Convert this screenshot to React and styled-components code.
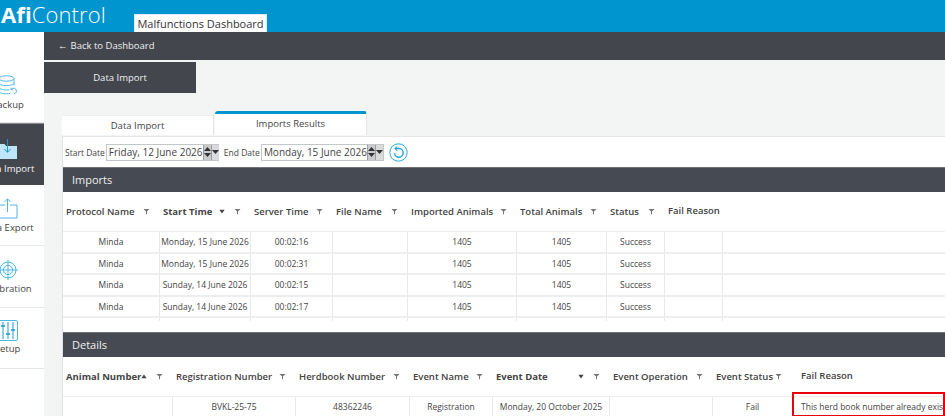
import React from 'react';
import styled, { createGlobalStyle } from 'styled-components';

const Global = createGlobalStyle`
  html, body {
    margin: 0;
    height: 416px;
    overflow: hidden;
    background: #f3f5f5;
    font-family: "Open Sans", "Noto Sans", sans-serif;
    color: #444;
  }
  * { box-sizing: border-box; }
`;

const Page = styled.div`
  width: 945px;
  height: 416px;
  overflow: hidden;
  display: flex;
  flex-direction: column;
`;

const Header = styled.header`
  height: 32px;
  flex: none;
  background: #0095cf;
  display: flex;
  align-items: flex-end;
`;

const Logo = styled.div`
  width: 134px;
  align-self: flex-start;
  padding: 0 0 0 1px;
  font-size: 22px;
  line-height: 29px;
  font-weight: 300;
  color: #fff;
  letter-spacing: 0.1px;
  b { font-weight: 700; }
`;

const HeaderTab = styled.div`
  width: 133px;
  height: 18px;
  background: #fff;
  border: 1px solid #d6ecf6;
  border-bottom: 0;
  color: #333;
  font-size: 11px;
  line-height: 17px;
  text-align: center;
`;

const Body = styled.div`
  flex: 1;
  display: flex;
  min-height: 0;
`;

const Sidebar = styled.nav`
  width: 73px;
  margin-left: -29px;
  flex: none;
  background: #fff;
  padding-top: 28px;
`;

const NavItem = styled.div`
  height: ${p => p.$h}px;
  display: flex;
  flex-direction: column;
  align-items: center;
  padding-top: ${p => p.$top}px;
  gap: 1px;
  font-size: 9.5px;
  line-height: 13px;
  white-space: nowrap;
  color: ${p => (p.$active ? '#f2f3f4' : '#444')};
  background: ${p => (p.$active ? '#44464d' : '#fff')};
  border-bottom: 1px solid ${p => (p.$active ? '#44464d' : '#e4e6e8')};
  border-top: ${p => (p.$active ? '1px solid #8a8c90' : '0')};
  svg { display: block; flex: none; }
`;

const Main = styled.main`
  flex: 1;
  min-width: 0;
  display: flex;
  flex-direction: column;
`;

const BackBar = styled.div`
  height: 28px;
  flex: none;
  background: #44464d;
  color: #eef0f1;
  font-size: 9.5px;
  line-height: 28px;
  padding-left: 14px;
  display: flex;
  align-items: center;
  gap: 3px;
`;

const PageTitle = styled.div`
  width: 152px;
  height: 31px;
  flex: none;
  margin-top: 2px;
  background: #44464d;
  color: #eef0f1;
  font-size: 9.5px;
  line-height: 31px;
  text-align: center;
`;

const Content = styled.div`
  flex: 1;
  min-height: 0;
  padding: 17px 0 0 18px;
  display: flex;
  flex-direction: column;
`;

const Tabs = styled.div`
  height: 25px;
  flex: none;
  display: flex;
  align-items: flex-end;
  gap: 1px;
`;

const Tab = styled.div`
  width: ${p => p.$w}px;
  height: ${p => (p.$active ? 24 : 20)}px;
  background: #fff;
  border-top: ${p => (p.$active ? '3px solid #0095cf' : '1px solid #eceef0')};
  border-radius: ${p => (p.$active ? '3px 3px 0 0' : '0')};
  border-right: 1px solid #e4e6e8;
  font-size: 9.5px;
  line-height: 19px;
  text-align: center;
  color: #444;
`;

const Panel = styled.section`
  flex: 1;
  min-height: 0;
  margin-top: 1px;
  background: #fff;
  border-left: 1px solid #dfe2e4;
  border-top: 1px solid #e4e6e8;
`;

const DateRow = styled.div`
  height: 30px;
  display: flex;
  align-items: center;
  padding: 0 0 0 2px;
  font-size: 8.5px;
  color: #444;
`;

const DateLabel = styled.span`
  margin-right: ${p => p.$gap}px;
  margin-left: ${p => p.$left}px;
  white-space: nowrap;
`;

const DatePicker = styled.div`
  width: ${p => p.$w}px;
  height: 17px;
  display: flex;
  align-items: stretch;
  border: 1px solid #c4c7ca;
  font-size: 10px;
  line-height: 15px;
  padding-left: 2px;
  color: #444;
`;

const DateText = styled.span`
  flex: 1;
  white-space: nowrap;
`;

const Spin = styled.div`
  width: 11px;
  background: #c9cbce;
  border-left: 1px solid #9a9ca0;
  display: flex;
  flex-direction: column;
  align-items: center;
  justify-content: center;
  gap: 2px;
`;

const Drop = styled.div`
  width: 11px;
  background: #d8dadc;
  border-left: 1px solid #9a9ca0;
  display: flex;
  align-items: center;
  justify-content: center;
`;

const RefreshWrap = styled.div`
  margin-left: 5px;
  display: flex;
`;

const SectionBar = styled.div`
  height: 25px;
  background: #464a52;
  border-top: 1px solid #6f7278;
  color: #eef0f1;
  font-size: 11px;
  line-height: 24px;
  padding-left: 9px;
`;

const Grid = styled.div`
  display: grid;
  grid-template-columns: ${p => p.$cols};
`;

const HeadRow = styled(Grid)`
  height: 40px;
  border-bottom: 1px solid #eceef0;
`;

const HeadCell = styled.div`
  display: flex;
  align-items: center;
  justify-content: space-between;
  padding: 0 10px 0 3px;
  font-size: 9.5px;
  font-weight: ${p => (p.$strong ? 700 : 600)};
  color: #444;
  white-space: nowrap;
`;

const HeadIcons = styled.span`
  display: flex;
  align-items: center;
  gap: 9px;
`;

const PlainHead = styled.div`
  padding: 12px 0 0 3px;
  font-size: 9.5px;
  font-weight: 600;
  color: #444;
  white-space: nowrap;
`;

const Row = styled(Grid)`
  height: 21.5px;
  border-bottom: 2px solid #eceef0;
`;

const Cell = styled.div`
  border-right: ${p => (p.$bare ? '0' : '1px solid #e6e8ea')};
  font-size: 8.5px;
  line-height: 20px;
  text-align: center;
  color: #444;
  white-space: nowrap;
  overflow: hidden;
`;

const Stubs = styled(Grid)`
  height: 3px;
  margin-bottom: 11px;
`;

const DetailRow = styled(Grid)`
  height: 21px;
  background: linear-gradient(#333, #333) left bottom / 675px 1px no-repeat;
`;

const ReasonCell = styled.div`
  position: relative;
  padding-left: 9px;
  font-size: 8.5px;
  line-height: 20px;
  white-space: nowrap;
  color: #444;
`;

const Highlight = styled.div`
  position: absolute;
  left: 0;
  top: -5px;
  width: 153px;
  height: 25px;
  border: 2.5px solid #e8000d;
`;

const Funnel = () => (
  <svg width="7" height="7" viewBox="0 0 7 7"><path d="M0.5 1h6L4 3.6V6.2H3V3.6z" fill="#777" /></svg>
);

const Sort = ({ up }) => (
  <svg width="6" height="5" viewBox="0 0 6 5"><path d={up ? 'M3 .5L5.6 4.2H.4z' : 'M.4 .8h5.2L3 4.5z'} fill="#444" /></svg>
);

const Spinner = ({ up }) => (
  <svg width="7" height="4" viewBox="0 0 7 4"><path d={up ? 'M3.5 0L7 4H0z' : 'M0 0h7L3.5 4z'} fill="#333" /></svg>
);

const Refresh = () => (
  <svg width="19" height="19" viewBox="0 0 19 19" fill="none" stroke="#2aa5dc">
    <circle cx="9.5" cy="9.5" r="8.7" strokeWidth="1" />
    <path d="M6.6 5.6h3.6a4.3 4.3 0 1 1-4.6 4.6" strokeWidth="1.5" />
    <path d="M8.3 3.6L6.1 5.6l2.2 2" strokeWidth="1.2" />
  </svg>
);

const BackupIcon = () => (
  <svg width="22" height="22" viewBox="0 0 22 22" fill="none" stroke="#4db8e8" strokeWidth="1">
    <ellipse cx="9.5" cy="3.5" rx="7.5" ry="2.7" />
    <path d="M2 3.5v12.5c0 1.6 3.4 2.8 7.5 2.8 1.4 0 2.6-.1 3.7-.4M17 3.5v7" />
    <path d="M2 7.8c0 1.6 3.4 2.8 7.5 2.8S17 9.4 17 7.8M2 12.2c0 1.6 3.4 2.8 7.5 2.8 1 0 2-.1 2.8-.2" />
    <path d="M14 14.6a3 3 0 0 1 5.5 1.4c0 1.5-1.2 2.6-2.6 2.6M14 12.6v2.2h2.2" />
  </svg>
);

const ImportIcon = () => (
  <svg width="21" height="22" viewBox="0 0 21 22">
    <path d="M1 5h6.5l1.5 2h11v13H1z" fill="#bfe6f8" />
    <path d="M10.5 0v13M7.5 10l3 3.4 3-3.4" fill="none" stroke="#1b9bd6" strokeWidth="1" />
  </svg>
);

const ExportIcon = () => (
  <svg width="21" height="22" viewBox="0 0 21 22" fill="none" stroke="#4db8e8" strokeWidth="1">
    <path d="M8 7H1v13h19V7h-7" />
    <path d="M10.5 14V1M7.5 4l3-3.2 3 3.2" />
  </svg>
);

const CalibrationIcon = () => (
  <svg width="20" height="22" viewBox="0 0 20 22" fill="none" stroke="#4db8e8" strokeWidth="1">
    <circle cx="10" cy="11" r="8" />
    <circle cx="10" cy="11" r="4.6" />
    <path d="M10 1v20M0 11h20" />
  </svg>
);

const SetupIcon = () => (
  <svg width="20" height="21" viewBox="0 0 20 21" fill="none" stroke="#4db8e8" strokeWidth="1">
    <rect x=".5" y=".5" width="19" height="20" rx="1.5" />
    <path d="M5 2v17M10 2v17M15 2v17" stroke="#1b9bd6" />
    <path d="M3 6h4M8 14h4M13 10h4" stroke="#1b9bd6" strokeWidth="1.6" />
  </svg>
);

const importCols = '97px 91px 82px 75px 109px 90px 58px 58px 1fr';
const detailCols = '110px 123px 114px 83px 117px 103px 79px 1fr';

const importHeads = [
  { label: 'Protocol Name' },
  { label: 'Start Time', strong: true, sort: 'down' },
  { label: 'Server Time' },
  { label: 'File Name' },
  { label: 'Imported Animals' },
  { label: 'Total Animals' },
  { label: 'Status' },
];

const importRows = [
  ['Minda', 'Monday, 15 June 2026', '00:02:16'],
  ['Minda', 'Monday, 15 June 2026', '00:02:31'],
  ['Minda', 'Sunday, 14 June 2026', '00:02:15'],
  ['Minda', 'Sunday, 14 June 2026', '00:02:17'],
];

const detailHeads = [
  { label: 'Animal Number', strong: true, sort: 'up' },
  { label: 'Registration Number' },
  { label: 'Herdbook Number' },
  { label: 'Event Name' },
  { label: 'Event Date', strong: true, sort: 'down' },
  { label: 'Event Operation' },
  { label: 'Event Status' },
];

const HeadColumns = ({ heads }) =>
  heads.map(h => (
    <HeadCell key={h.label} $strong={h.strong}>
      <span>{h.label}</span>
      <HeadIcons>
        {h.sort && <Sort up={h.sort === 'up'} />}
        <Funnel />
      </HeadIcons>
    </HeadCell>
  ));

const App = () => {
  return (
    <Page>
      <Global />
      <Header>
        <Logo><b>Afi</b>Control</Logo>
        <HeaderTab>Malfunctions Dashboard</HeaderTab>
      </Header>
      <Body>
        <Sidebar>
          <NavItem $h={63} $top={15}><BackupIcon />Backup</NavItem>
          <NavItem $h={62} $top={15} $active><ImportIcon />Data Import</NavItem>
          <NavItem $h={61} $top={13}><ExportIcon />Data Export</NavItem>
          <NavItem $h={62} $top={13}><CalibrationIcon />Calibration</NavItem>
          <NavItem $h={61} $top={12}><SetupIcon />Setup</NavItem>
        </Sidebar>
        <Main>
          <BackBar><span>←</span> Back to Dashboard</BackBar>
          <PageTitle>Data Import</PageTitle>
          <Content>
            <Tabs>
              <Tab $w={152}>Data Import</Tab>
              <Tab $w={152} $active>Imports Results</Tab>
            </Tabs>
            <Panel>
              <DateRow>
                <DateLabel $gap={1}>Start Date</DateLabel>
                <DatePicker $w={113}>
                  <DateText>Friday, 12 June 2026</DateText>
                  <Spin><Spinner up /><Spinner /></Spin>
                  <Drop><Spinner /></Drop>
                </DatePicker>
                <DateLabel $left={5} $gap={1}>End Date</DateLabel>
                <DatePicker $w={123}>
                  <DateText>Monday, 15 June 2026</DateText>
                  <Spin><Spinner up /><Spinner /></Spin>
                  <Drop><Spinner /></Drop>
                </DatePicker>
                <RefreshWrap><Refresh /></RefreshWrap>
              </DateRow>
              <SectionBar>Imports</SectionBar>
              <HeadRow $cols={importCols}>
                <HeadColumns heads={importHeads} />
                <PlainHead>Fail Reason</PlainHead>
              </HeadRow>
              {importRows.map((r, i) => (
                <Row key={i} $cols={importCols}>
                  <Cell>{r[0]}</Cell>
                  <Cell>{r[1]}</Cell>
                  <Cell>{r[2]}</Cell>
                  <Cell />
                  <Cell>1405</Cell>
                  <Cell>1405</Cell>
                  <Cell>Success</Cell>
                  <Cell />
                  <Cell $bare />
                </Row>
              ))}
              <Stubs $cols={importCols}>
                {Array.from({ length: 8 }, (_, i) => <Cell key={i} />)}
              </Stubs>
              <SectionBar>Details</SectionBar>
              <HeadRow $cols={detailCols}>
                <HeadColumns heads={detailHeads} />
                <PlainHead style={{ paddingLeft: 9 }}>Fail Reason</PlainHead>
              </HeadRow>
              <DetailRow $cols={detailCols}>
                <Cell />
                <Cell>BVKL-25-75</Cell>
                <Cell>48362246</Cell>
                <Cell>Registration</Cell>
                <Cell>Monday, 20 October 2025</Cell>
                <Cell />
                <Cell $bare>Fail</Cell>
                <ReasonCell>
                  This herd book number already exists
                  <Highlight />
                </ReasonCell>
              </DetailRow>
            </Panel>
          </Content>
        </Main>
      </Body>
    </Page>
  );
};

export default App;
